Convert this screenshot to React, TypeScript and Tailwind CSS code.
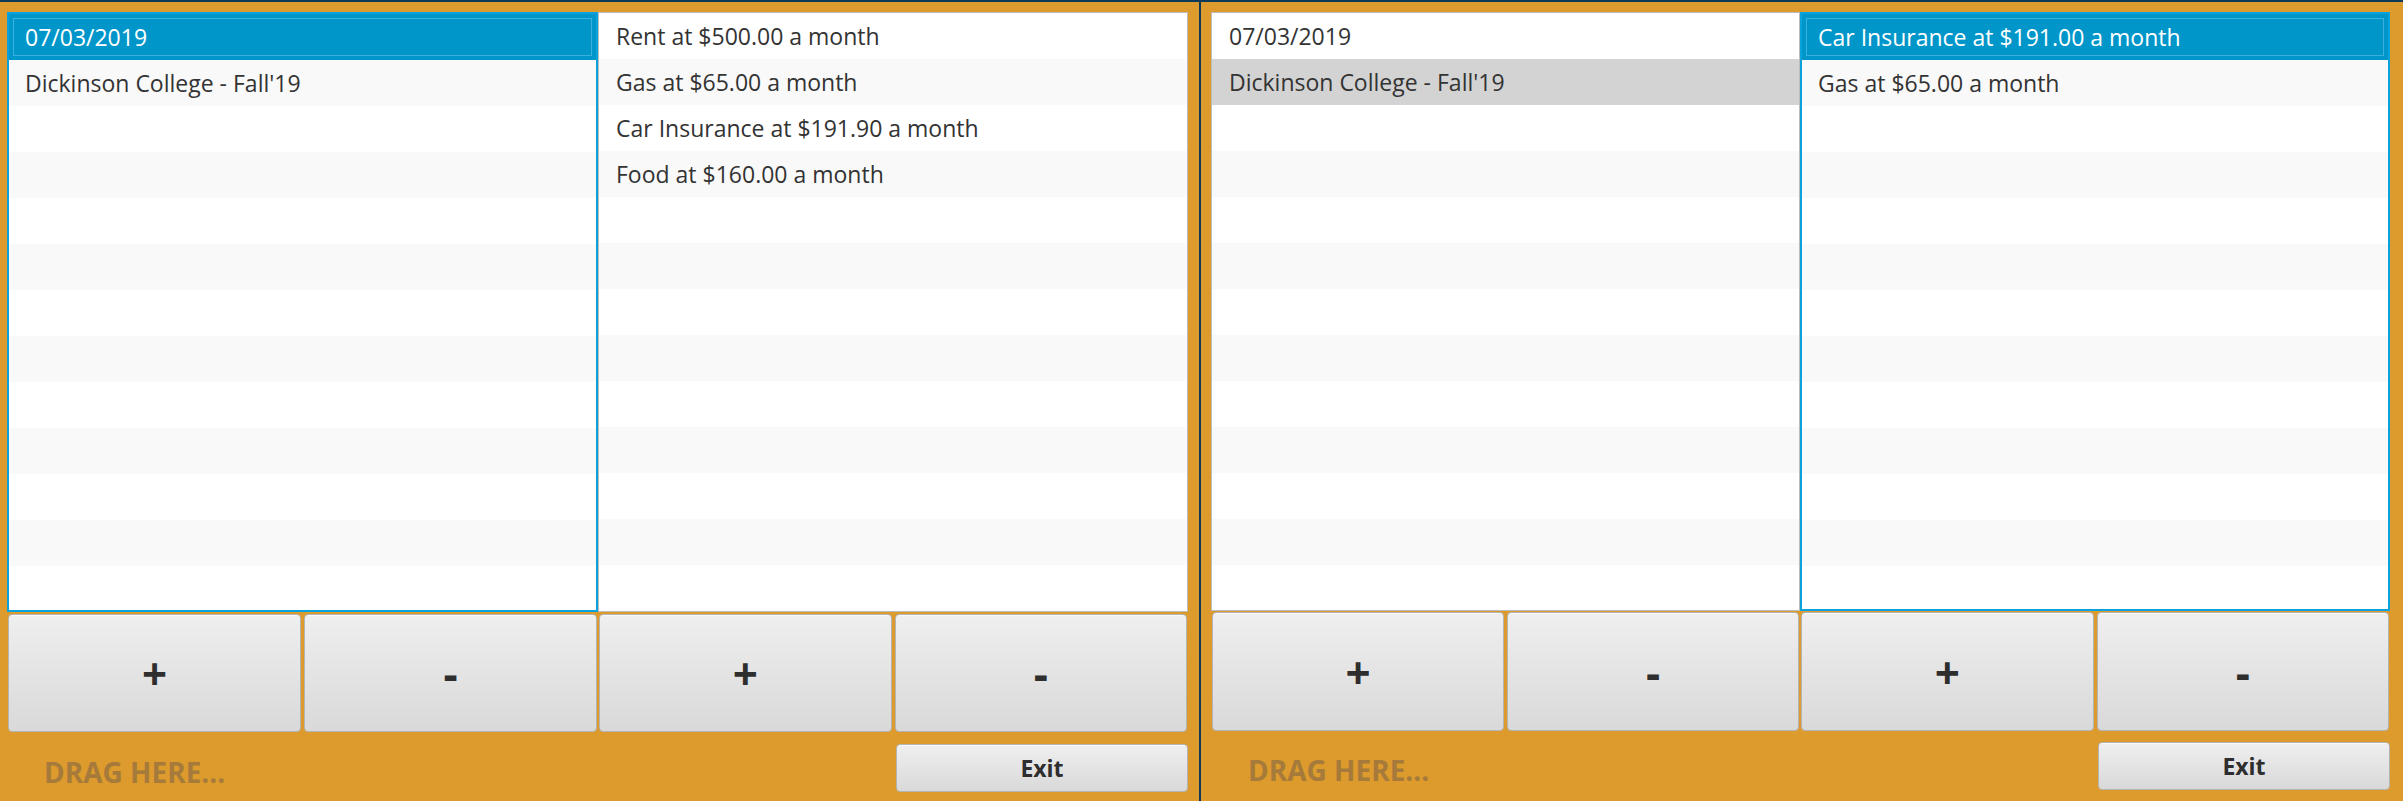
import React from "react";

type ListProps = {
  items: string[];
  focused: boolean;
  // index of selected item, and whether it is the focused (blue) selection
  selected?: number;
  height: number;
};

const ROWS = 13;
const FONT = { fontFamily: '"Open Sans", "Noto Sans", sans-serif' };

function ItemList({ items, focused, selected, height }: ListProps) {
  const rows = Array.from({ length: ROWS }, (_, i) => items[i] ?? "");
  return (
    <div
      className={`overflow-hidden bg-white ${
        focused ? "border-2 border-[#0aa2dc]" : "border border-[#bcbcbc]"
      }`}
      style={{ height }}
    >
      {rows.map((text, i) => {
        const isSel = selected === i;
        let cls = i % 2 === 0 ? "bg-white text-[#333]" : "bg-[#f9f9f9] text-[#333]";
        if (isSel && focused)
          cls =
            "bg-[#0096c9] text-white shadow-[inset_0_0_0_4px_#0096c9,inset_0_0_0_5px_#3cb0dc]";
        else if (isSel) cls = "bg-[#d3d3d3] text-[#333]";
        return (
          <div
            key={i}
            className={`flex h-[46px] shrink-0 items-center whitespace-nowrap text-[23px] ${
              focused ? "pl-[16px]" : "pl-[17px]"
            } ${cls}`}
          >
            {text}
          </div>
        );
      })}
    </div>
  );
}

function GrayButton({
  children,
  className = "",
}: {
  children: React.ReactNode;
  className?: string;
}) {
  return (
    <button
      className={`flex items-center justify-center rounded-[4px] border border-[#b4b4b4] bg-gradient-to-b from-[#efefef] to-[#d9d9d9] font-bold text-[#2e2e2e] shadow-[inset_0_1px_0_#fafafa] ${className}`}
    >
      {children}
    </button>
  );
}

type HalfProps = {
  padLeft: number;
  cols: [number, number];
  listH: number;
  btnGap: number;
  btnH: number;
  exitGap: number;
  left: { items: string[]; focused: boolean; selected?: number };
  right: { items: string[]; focused: boolean; selected?: number };
  className?: string;
};

function Half({ padLeft, cols, listH, btnGap, btnH, exitGap, left, right, className = "" }: HalfProps) {
  const sides = [left, right];
  return (
    <div className={`h-full bg-[#dd9a2d] pt-[10px] ${className}`} style={{ paddingLeft: padLeft }}>
      <div className="grid" style={{ gridTemplateColumns: `${cols[0]}px ${cols[1]}px` }}>
        {sides.map((s, i) => (
          <ItemList key={i} items={s.items} focused={s.focused} selected={s.selected} height={listH} />
        ))}
        {sides.map((_, i) => (
          <div
            key={"b" + i}
            className="grid grid-cols-2 gap-[3px] px-[1px]"
            style={{ height: btnH, marginTop: btnGap }}
          >
            <GrayButton className="text-[44px] leading-none">+</GrayButton>
            <GrayButton className="text-[44px] leading-none">-</GrayButton>
          </div>
        ))}
        <div className="flex h-[48px] items-center pl-[37px] pt-[8px]" style={{ marginTop: exitGap }}>
          <span className="text-[28px] font-bold text-[#a67a3a]">DRAG HERE...</span>
        </div>
        <div className="flex h-[48px] justify-end" style={{ marginTop: exitGap }}>
          <GrayButton className="h-[48px] w-[292px] text-[23px]">Exit</GrayButton>
        </div>
      </div>
    </div>
  );
}

export default function App() {
  const dates = ["07/03/2019", "Dickinson College - Fall'19"];
  return (
    <div className="flex h-[801px] w-[2403px] gap-[2px] bg-[#0d3a58] pt-[2px]" style={FONT}>
      <Half
        className="w-[1199px]"
        padLeft={7}
        cols={[591, 590]}
        listH={600}
        btnGap={2}
        btnH={118}
        exitGap={12}
        left={{ items: dates, focused: true, selected: 0 }}
        right={{
          items: [
            "Rent at $500.00 a month",
            "Gas at $65.00 a month",
            "Car Insurance at $191.90 a month",
            "Food at $160.00 a month",
          ],
          focused: false,
        }}
      />
      <Half
        className="flex-1"
        padLeft={10}
        cols={[589, 590]}
        listH={599}
        btnGap={1}
        btnH={119}
        exitGap={11}
        left={{ items: dates, focused: false, selected: 1 }}
        right={{
          items: ["Car Insurance at $191.00 a month", "Gas at $65.00 a month"],
          focused: true,
          selected: 0,
        }}
      />
    </div>
  );
}
